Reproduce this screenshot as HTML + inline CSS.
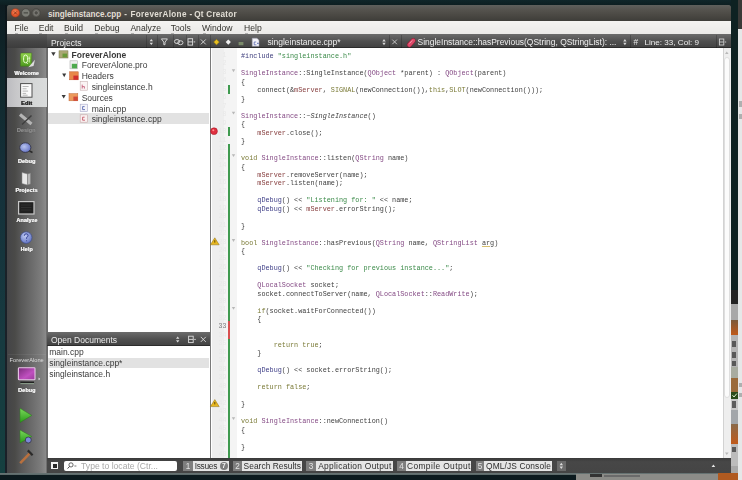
<!DOCTYPE html><html><head><meta charset="utf-8"><style>
*{margin:0;padding:0;box-sizing:border-box}
html,body{width:742px;height:480px;overflow:hidden;background:#10201f;font-family:"Liberation Sans",sans-serif}
.a{position:absolute}
.tx{white-space:nowrap;line-height:1}
svg.a{overflow:visible}
#code{font-family:"Liberation Mono",monospace;font-size:8px;line-height:8.486px;color:#3e3e3e;white-space:pre;transform:scaleX(0.8505);transform-origin:0 0}
#code .p{color:#40407e}
#code .s{color:#3a8a48}
#code .t{color:#844a84}
#code .k{color:#7a7a36}
#code .f{color:#884040}
#code .m{color:#404088}
#code i{font-style:italic}
#code u{text-decoration:underline;text-decoration-color:#d8c070}
</style></head><body><div id="root" style="position:absolute;left:0;top:0;width:742px;height:480px;overflow:hidden;filter:blur(0.3px)">
<div class="a" style="left:0.00px;top:0.00px;width:742.00px;height:6.00px;background:linear-gradient(#10262a,#0d1d20)"></div>
<div class="a" style="left:0.00px;top:5.00px;width:7.00px;height:475.00px;background:linear-gradient(#0e1c21,#10282c 15%,#15303a 35%,#173a40 70%,#154040)"></div>
<div class="a" style="left:4.80px;top:5.00px;width:2.20px;height:468.00px;background:linear-gradient(#0c161a,#1a2228 40%,#1a2028)"></div>
<div class="a" style="left:0.00px;top:472.60px;width:742.00px;height:7.40px;background:linear-gradient(#6a7676,#5a6868 25%,#0c1a1e 32%,#0b1a1e)"></div>
<div class="a" style="left:576.00px;top:474.40px;width:166.00px;height:5.60px;background:#8c8c88"></div>
<div class="a" style="left:590.00px;top:474.00px;width:12.00px;height:2.50px;background:#333"></div>
<div class="a" style="left:604.00px;top:475.00px;width:36.00px;height:2.00px;background:#6a6a6a"></div>
<div class="a" style="left:718.00px;top:473.00px;width:24.00px;height:7.00px;background:#b05a20"></div>
<div class="a" style="left:731.00px;top:0.00px;width:6.60px;height:480.00px;background:#0e2222"></div>
<div class="a" style="left:737.60px;top:0.00px;width:4.40px;height:28.70px;background:#3a3a38"></div>
<div class="a" style="left:737.60px;top:28.70px;width:4.40px;height:451.30px;background:#e6e8e8"></div>
<div class="a" style="left:731.00px;top:290.00px;width:6.60px;height:14.00px;background:#232323"></div>
<div class="a" style="left:731.00px;top:304.00px;width:6.60px;height:16.00px;background:#a8a8a8"></div>
<div class="a" style="left:731.00px;top:320.00px;width:6.60px;height:15.00px;background:linear-gradient(#7a5a3a,#c05a1a)"></div>
<div class="a" style="left:731.00px;top:335.00px;width:6.60px;height:32.00px;background:#b4b4b4"></div>
<div class="a" style="left:731.00px;top:367.00px;width:6.60px;height:11.00px;background:#a8aca0"></div>
<div class="a" style="left:731.00px;top:378.00px;width:6.60px;height:14.00px;background:#9a6a3a"></div>
<div class="a" style="left:731.00px;top:392.00px;width:6.60px;height:7.00px;background:#2a4a1a"></div>
<div class="a" style="left:731.00px;top:399.00px;width:6.60px;height:11.00px;background:#c8c8c8"></div>
<div class="a" style="left:731.00px;top:410.00px;width:6.60px;height:14.00px;background:#a2a6aa"></div>
<div class="a" style="left:731.00px;top:424.00px;width:6.60px;height:20.00px;background:linear-gradient(#8a6a4a,#c05a1a)"></div>
<div class="a" style="left:731.00px;top:444.00px;width:6.60px;height:22.00px;background:#bcbcbc"></div>
<div class="a" style="left:731.00px;top:466.00px;width:6.60px;height:7.00px;background:#a8a8a8"></div>
<div class="a" style="left:731.00px;top:473.00px;width:6.60px;height:7.00px;background:#b05a20"></div>
<div class="a" style="left:731.80px;top:341.00px;width:4.20px;height:6.00px;background:#3a3a3a;opacity:.75"></div>
<div class="a" style="left:731.80px;top:352.00px;width:4.20px;height:6.00px;background:#3a3a3a;opacity:.75"></div>
<div class="a" style="left:731.80px;top:361.00px;width:4.20px;height:5.00px;background:#3a3a3a;opacity:.75"></div>
<div class="a" style="left:731.80px;top:401.00px;width:4.20px;height:7.00px;background:#3a3a3a;opacity:.75"></div>
<div class="a" style="left:731.80px;top:447.00px;width:4.20px;height:5.00px;background:#3a3a3a;opacity:.75"></div>
<svg class="a" style="left:0;top:0" width="742" height="480" viewBox="0 0 742 480"><path d="M732.5 395.2 L734 397 L736.8 393.6" fill="none" stroke="#e0f0d0" stroke-width="1"/></svg>
<div class="a" style="left:738.60px;top:101.00px;width:3.40px;height:6.00px;background:#777;opacity:.5"></div>
<div class="a" style="left:738.60px;top:114.00px;width:3.40px;height:5.00px;background:#777;opacity:.5"></div>
<div class="a" style="left:738.60px;top:383.00px;width:3.40px;height:4.00px;background:#777;opacity:.5"></div>
<div class="a" style="left:738.60px;top:393.00px;width:3.40px;height:4.00px;background:#777;opacity:.5"></div>
<div class="a" style="left:7.00px;top:5.00px;width:724.00px;height:468.00px;background:#5a5a5a;border-radius:4px 4px 0 0"></div>
<div class="a" style="left:7.00px;top:5.00px;width:724.00px;height:15.80px;background:linear-gradient(#5f605d,#55534e 30%,#4a4843 65%,#3e3d39);border-radius:2.5px 2.5px 0 0"></div>
<svg class="a" style="left:0;top:0" width="742" height="480" viewBox="0 0 742 480">
<defs><radialGradient id="cls" cx=".45" cy=".4" r=".6"><stop offset="0" stop-color="#f5885a"/><stop offset=".7" stop-color="#e0542a"/><stop offset="1" stop-color="#c4461f"/></radialGradient>
<radialGradient id="gb" cx=".5" cy=".45" r=".6"><stop offset="0" stop-color="#8a8984"/><stop offset="1" stop-color="#62615c"/></radialGradient></defs>
<circle cx="15.4" cy="12.9" r="4.4" fill="url(#cls)" stroke="#6a3a2a" stroke-width=".4"/>
<path d="M13.9 11.4 l3 3 M16.9 11.4 l-3 3" stroke="#7a2a10" stroke-width=".8"/>
<circle cx="25.8" cy="12.9" r="4.2" fill="#7c7d76" stroke="#44433f" stroke-width=".7"/>
<path d="M23.6 12.9 h4.4" stroke="#3e3d39" stroke-width="1"/>
<circle cx="36.2" cy="12.9" r="4.2" fill="#66655f" stroke="#44433f" stroke-width=".7"/>
<circle cx="36.2" cy="12.9" r="2.2" fill="#4e4d48" stroke="#8a8984" stroke-width=".8"/>
</svg>
<div class="a tx" style="left:48.10px;top:10.70px;font-size:8.15px;color:#e2ded5;font-weight:bold;">singleinstance.cpp</div>
<div class="a tx" style="left:124.20px;top:10.70px;font-size:8.15px;color:#e2ded5;font-weight:bold;">-</div>
<div class="a tx" style="left:130.50px;top:10.70px;font-size:8.15px;color:#e2ded5;font-weight:bold;letter-spacing:.32px">ForeverAlone</div>
<div class="a tx" style="left:189.50px;top:10.70px;font-size:8.15px;color:#e2ded5;font-weight:bold;">-</div>
<div class="a tx" style="left:194.30px;top:10.70px;font-size:8.15px;color:#e2ded5;font-weight:bold;letter-spacing:.24px">Qt Creator</div>
<div class="a" style="left:7.00px;top:20.80px;width:724.00px;height:13.20px;background:linear-gradient(#f4f3f1,#ebeae8)"></div>
<div class="a tx" style="left:14.60px;top:23.82px;font-size:8.60px;color:#35342f;">File</div>
<div class="a" style="left:15.20px;top:32.50px;width:3.00px;height:0.60px;background:rgba(90,90,90,.4)"></div>
<div class="a tx" style="left:38.70px;top:23.82px;font-size:8.60px;color:#35342f;">Edit</div>
<div class="a" style="left:39.30px;top:32.50px;width:3.00px;height:0.60px;background:rgba(90,90,90,.4)"></div>
<div class="a tx" style="left:64.00px;top:23.82px;font-size:8.60px;color:#35342f;">Build</div>
<div class="a" style="left:64.60px;top:32.50px;width:3.00px;height:0.60px;background:rgba(90,90,90,.4)"></div>
<div class="a tx" style="left:94.30px;top:23.82px;font-size:8.60px;color:#35342f;">Debug</div>
<div class="a" style="left:94.90px;top:32.50px;width:3.00px;height:0.60px;background:rgba(90,90,90,.4)"></div>
<div class="a tx" style="left:130.40px;top:23.82px;font-size:8.60px;color:#35342f;">Analyze</div>
<div class="a" style="left:131.00px;top:32.50px;width:3.00px;height:0.60px;background:rgba(90,90,90,.4)"></div>
<div class="a tx" style="left:170.80px;top:23.82px;font-size:8.60px;color:#35342f;">Tools</div>
<div class="a" style="left:171.40px;top:32.50px;width:3.00px;height:0.60px;background:rgba(90,90,90,.4)"></div>
<div class="a tx" style="left:202.00px;top:23.82px;font-size:8.60px;color:#35342f;">Window</div>
<div class="a" style="left:202.60px;top:32.50px;width:3.00px;height:0.60px;background:rgba(90,90,90,.4)"></div>
<div class="a tx" style="left:244.00px;top:23.82px;font-size:8.60px;color:#35342f;">Help</div>
<div class="a" style="left:244.60px;top:32.50px;width:3.00px;height:0.60px;background:rgba(90,90,90,.4)"></div>
<div class="a" style="left:7.00px;top:34.20px;width:39.50px;height:438.80px;background:linear-gradient(90deg,#444447,#4a4a48 20%,#585858 35%,#6a6a6a 60%,#7c7c7c 85%,#8a8a8a 97%,#5a5a5a)"></div>
<div class="a" style="left:7.00px;top:34.20px;width:39.50px;height:14.20px;background:linear-gradient(#5c5c5c,#474747 50%,#3c3c3c)"></div>
<div class="a" style="left:7.00px;top:77.60px;width:39.50px;height:29.20px;background:linear-gradient(90deg,#bcbcc0,#c8c8ca 25%,#d4d6d6 60%,#dadcdc)"></div>
<div class="a tx" style="left:6.50px;top:71.46px;width:40px;text-align:center;font-size:5.60px;color:#f0f0f0;font-weight:bold;text-shadow:.35px 0 0 #f0f0f0,0 0 1px rgba(0,0,0,.5)">Welcome</div>
<div class="a tx" style="left:6.5px;top:100.51px;width:40px;text-align:center;font-size:5.9px;color:#2a2a2a;font-weight:bold;text-shadow:.35px 0 0 #2a2a2a">Edit</div>
<div class="a tx" style="left:6.00px;top:127.76px;width:40px;text-align:center;font-size:5.60px;color:#8a8a8a;font-weight:bold;text-shadow:.35px 0 0 #8a8a8a,0 0 1px rgba(0,0,0,.5)">Design</div>
<div class="a tx" style="left:6.50px;top:159.46px;width:40px;text-align:center;font-size:5.60px;color:#f0f0f0;font-weight:bold;text-shadow:.35px 0 0 #f0f0f0,0 0 1px rgba(0,0,0,.5)">Debug</div>
<div class="a tx" style="left:6.40px;top:188.46px;width:40px;text-align:center;font-size:5.60px;color:#f0f0f0;font-weight:bold;text-shadow:.35px 0 0 #f0f0f0,0 0 1px rgba(0,0,0,.5)">Projects</div>
<div class="a tx" style="left:6.80px;top:218.16px;width:40px;text-align:center;font-size:5.60px;color:#f0f0f0;font-weight:bold;text-shadow:.35px 0 0 #f0f0f0,0 0 1px rgba(0,0,0,.5)">Analyze</div>
<div class="a tx" style="left:6.50px;top:247.06px;width:40px;text-align:center;font-size:5.60px;color:#f0f0f0;font-weight:bold;text-shadow:.35px 0 0 #f0f0f0,0 0 1px rgba(0,0,0,.5)">Help</div>
<div class="a" style="left:8.00px;top:354.00px;width:38.00px;height:0.80px;background:rgba(255,255,255,.06)"></div>
<div class="a tx" style="left:6.7px;top:357.77px;width:40px;text-align:center;font-size:5.7px;color:#dcdcdc">ForeverAlone</div>
<div class="a tx" style="left:6.70px;top:388.06px;width:40px;text-align:center;font-size:5.60px;color:#f0f0f0;font-weight:bold;text-shadow:.35px 0 0 #f0f0f0,0 0 1px rgba(0,0,0,.5)">Debug</div>
<svg class="a" style="left:0;top:0" width="742" height="480" viewBox="0 0 742 480">
<defs>
<linearGradient id="qtg" x1="0" y1="0" x2="0" y2="1"><stop offset="0" stop-color="#8fd14a"/><stop offset="1" stop-color="#4e9a1e"/></linearGradient>
<linearGradient id="mon" x1="0" y1="0" x2="1" y2="1"><stop offset="0" stop-color="#7a2a7a"/><stop offset=".6" stop-color="#c050c0"/><stop offset="1" stop-color="#9a3a9a"/></linearGradient>
<linearGradient id="grn" x1="0" y1="0" x2="0" y2="1"><stop offset="0" stop-color="#7ad85a"/><stop offset="1" stop-color="#2a9a1a"/></linearGradient>
<radialGradient id="bug" cx=".4" cy=".4" r=".6"><stop offset="0" stop-color="#b8c4f0"/><stop offset="1" stop-color="#6a78c8"/></radialGradient>
<radialGradient id="help" cx=".4" cy=".35" r=".7"><stop offset="0" stop-color="#c0ccf4"/><stop offset="1" stop-color="#5d6fc0"/></radialGradient>
</defs>
<!-- Welcome Qt logo -->
<path d="M21.5 53 H31.7 V64 L29.5 66.2 H20.4 V54 Z" fill="url(#qtg)" stroke="#3e6e1a" stroke-width=".5"/>
<path d="M23.6 57.6 q0-2.6 2-2.6 q2 0 2 2.6 v2.8 q0 2.4-2 2.4 q-2 0-2-2.4z M26.2 62 l1.4 2" fill="none" stroke="#e8ffd0" stroke-width="1"/>
<path d="M29.2 56.5 v6 M28.4 58.2 h1.8" stroke="#e8ffd0" stroke-width=".8"/>
<path d="M28.3 67.3 L35 59.8 L33.5 66 Z" fill="#dcdcdc"/>
<!-- Edit doc -->
<rect x="20.6" y="83.6" width="11.4" height="13.6" fill="#fafafa" stroke="#505050" stroke-width="1"/>
<path d="M22.6 86.5h6 M22.6 88.8h4 M22.6 91.1h5.5 M22.6 93.4h3.5 M22.6 95.2h5" stroke="#9a9a9a" stroke-width=".7"/>
<!-- Design -->
<path d="M20 114.5 L31.5 124" stroke="#b4b4b4" stroke-width="3.2"/>
<path d="M31.5 115.5 L22 124.5" stroke="#3e3e3e" stroke-width="1.4"/>
<!-- Debug bug -->
<ellipse cx="25.3" cy="147.6" rx="5.6" ry="4.8" fill="url(#bug)" stroke="#2e2e3e" stroke-width=".8"/>
<path d="M29.5 151 L32.5 152.5" stroke="#2a2a2a" stroke-width="1.5"/>
<!-- Projects -->
<path d="M22 172.5 L27.5 174 V185 L22 183.5 Z" fill="#e8e8e8" stroke="#888" stroke-width=".5"/>
<path d="M27.5 174 L30.6 173 V184 L27.5 185 Z" fill="#b8b8b8" stroke="#777" stroke-width=".5"/>
<!-- Analyze -->
<rect x="18.6" y="201.6" width="15.4" height="12.4" fill="#202020" stroke="#c8c8c8" stroke-width="1.2"/>
<path d="M21 205h10.5 M21 207.5h10.5 M21 210h10.5" stroke="#3a3a3a" stroke-width=".6"/>
<!-- Help -->
<circle cx="26.2" cy="237.6" r="5.8" fill="url(#help)" stroke="#3a4a8a" stroke-width=".6"/>
<path d="M24.3 235.8 q0-2 1.9-2 q1.9 0 1.9 1.8 q0 1.2-1.5 1.9 v1.3" fill="none" stroke="#27348a" stroke-width=".9"/>
<circle cx="26.6" cy="240.8" r=".55" fill="#27348a"/>
<!-- Monitor -->
<rect x="18.4" y="367.8" width="16.6" height="12" rx=".8" fill="url(#mon)" stroke="#e8c8e8" stroke-width="1.1"/>
<path d="M20.4 382.6 H34 " stroke="#202020" stroke-width="2"/>
<path d="M20.4 383.6 H34 " stroke="#c8e8c8" stroke-width=".6"/>
<path d="M38.6 377.6 L40.2 378.9 L38.6 380.2 Z" fill="#f0f0f0"/>
<!-- Run -->
<path d="M20 408.3 L31.8 415.4 L20 422.5 Z" fill="url(#grn)" stroke="#2a7a1a" stroke-width=".5"/>
<path d="M20 430 L31.8 436.5 L20 443 Z" fill="url(#grn)" stroke="#2a7a1a" stroke-width=".5"/>
<circle cx="28.3" cy="440" r="3" fill="#7c88d8" stroke="#2a2a3a" stroke-width=".7"/>
<!-- Hammer -->
<path d="M20.2 463.2 L30 453.2" stroke="#b8703e" stroke-width="2.6"/>
<path d="M27.8 450.4 L32.6 455.2" stroke="#2a2a2a" stroke-width="2.2"/>
</svg>
<div class="a" style="left:46.50px;top:34.20px;width:163.80px;height:14.20px;background:linear-gradient(#6c6c6c,#505050 55%,#434343);border-bottom:1px solid #2c2c2c"></div>
<div class="a tx" style="left:50.90px;top:38.60px;font-size:8.50px;color:#ececec;">Projects</div>
<div class="a" style="left:46.50px;top:48.40px;width:163.80px;height:283.80px;background:#fff;border-left:1px solid #6a6a6a"></div>
<div class="a" style="left:47.50px;top:113.10px;width:161.30px;height:10.50px;background:#e2e2e2"></div>
<div class="a tx" style="left:71.50px;top:50.50px;font-size:8.50px;color:#3a3a3a;font-weight:bold;">ForeverAlone</div>
<div class="a tx" style="left:81.70px;top:61.30px;font-size:8.50px;color:#3a3a3a;">ForeverAlone.pro</div>
<div class="a tx" style="left:81.70px;top:72.10px;font-size:8.50px;color:#3a3a3a;">Headers</div>
<div class="a tx" style="left:91.70px;top:82.90px;font-size:8.50px;color:#3a3a3a;">singleinstance.h</div>
<div class="a tx" style="left:81.70px;top:93.70px;font-size:8.50px;color:#3a3a3a;">Sources</div>
<div class="a tx" style="left:91.70px;top:104.50px;font-size:8.50px;color:#3a3a3a;">main.cpp</div>
<div class="a tx" style="left:91.70px;top:115.30px;font-size:8.50px;color:#3a3a3a;">singleinstance.cpp</div>
<svg class="a" style="left:0;top:0" width="742" height="480" viewBox="0 0 742 480">
<path d="M51.2 52.3 H55.6 L53.4 56 Z" fill="#3a3a3a"/>
<path d="M62.2 73.6 H66.2 L64.2 77.3 Z" fill="#3a3a3a"/>
<path d="M61.6 95 H65.8 L63.7 98.5 Z" fill="#3a3a3a"/>
<rect x="59" y="50.8" width="9" height="7.2" fill="#aaa874" stroke="#7a7850" stroke-width=".5"/>
<rect x="62.5" y="53.6" width="4.6" height="3.8" fill="#6a9a3a"/>
<rect x="70" y="60.8" width="7.6" height="8" fill="#f0f0f0" stroke="#b0b0b0" stroke-width=".6"/>
<rect x="71.8" y="63.8" width="5.2" height="4.6" fill="#4eaa4e"/>
<rect x="69.6" y="71.8" width="8.6" height="8" fill="#e8884a" stroke="#c05a2a" stroke-width=".5"/>
<rect x="73.4" y="75.6" width="4.8" height="4.2" fill="#d03030"/>
<rect x="80.2" y="81.6" width="7.2" height="8.6" fill="#fbf4f4" stroke="#c8b0b0" stroke-width=".6"/>
<path d="M82.2 84.6 v4 M82.2 86.6 h2.2 v2" fill="none" stroke="#c05070" stroke-width=".8"/>
<rect x="69" y="93.6" width="8.8" height="7.2" fill="#ec9a5c" stroke="#c06a3a" stroke-width=".5"/>
<rect x="73.4" y="96.6" width="4.4" height="4.2" fill="#d04a3a"/>
<rect x="80.2" y="104.2" width="7.2" height="7.2" fill="#f4f4fa" stroke="#a8a8c8" stroke-width=".6"/>
<path d="M84.6 106.6 h-2 v3 h2.4" fill="none" stroke="#4a5aa8" stroke-width=".8"/>
<rect x="80.2" y="114.8" width="7.2" height="7.4" fill="#faf0f0" stroke="#c8a8a8" stroke-width=".6"/>
<path d="M84.6 117.2 h-2 v3 h2.4" fill="none" stroke="#c04a5a" stroke-width=".8"/>
</svg>
<div class="a" style="left:46.50px;top:332.20px;width:163.80px;height:13.80px;background:linear-gradient(#6c6c6c,#505050 55%,#434343);border-bottom:1px solid #2c2c2c"></div>
<div class="a tx" style="left:50.90px;top:336.20px;font-size:8.50px;color:#ececec;">Open Documents</div>
<div class="a" style="left:46.50px;top:346.00px;width:163.80px;height:112.20px;background:#fff;border-left:1px solid #6a6a6a"></div>
<div class="a" style="left:47.50px;top:357.60px;width:161.30px;height:10.20px;background:#e2e2e2"></div>
<div class="a tx" style="left:49.20px;top:348.20px;font-size:8.50px;color:#3a3a3a;">main.cpp</div>
<div class="a tx" style="left:49.20px;top:359.20px;font-size:8.50px;color:#3a3a3a;">singleinstance.cpp*</div>
<div class="a tx" style="left:49.20px;top:370.10px;font-size:8.50px;color:#3a3a3a;">singleinstance.h</div>
<svg class="a" style="left:0;top:0" width="742" height="480" viewBox="0 0 742 480" fill="none" stroke="#dcdcdc" stroke-width=".9"><path d="M149.6 41.3 L151.3 38.9 L153 41.3 Z M149.6 42.7 L151.3 45.1 L153 42.7 Z" fill="#dcdcdc" stroke="none"/><path d="M161.4 38.9 h6 l-2.4 3.2 v2.6 h-1.2 v-2.6 Z"/><ellipse cx="177" cy="41.5" rx="2.6" ry="2"/><ellipse cx="180.4" cy="42.7" rx="2.6" ry="2"/><rect x="188.0" y="38.7" width="4.6" height="6.4"/><path d="M188.0 41.9 h4.6 M193.6 41.9 h1.6"/><path d="M200.8 39.4 l5 5 M205.8 39.4 l-5 5"/></svg>
<svg class="a" style="left:0;top:0" width="742" height="480" viewBox="0 0 742 480" fill="none" stroke="#dcdcdc" stroke-width=".9"><path d="M176 338.8 L177.7 336.4 L179.4 338.8 Z M176 340.2 L177.7 342.6 L179.4 340.2 Z" fill="#dcdcdc" stroke="none"/><rect x="188.6" y="336.2" width="4.6" height="6.4"/><path d="M188.6 339.4 h4.6 M194.2 339.4 h1.6"/><path d="M200.8 336.9 l5 5 M205.8 336.9 l-5 5"/></svg>
<div class="a" style="left:146.00px;top:35.00px;width:0.80px;height:13.00px;background:rgba(0,0,0,.18)"></div>
<div class="a" style="left:156.60px;top:35.00px;width:0.80px;height:13.00px;background:rgba(0,0,0,.18)"></div>
<div class="a" style="left:173.00px;top:35.00px;width:0.80px;height:13.00px;background:rgba(0,0,0,.18)"></div>
<div class="a" style="left:185.60px;top:35.00px;width:0.80px;height:13.00px;background:rgba(0,0,0,.18)"></div>
<div class="a" style="left:198.00px;top:35.00px;width:0.80px;height:13.00px;background:rgba(0,0,0,.18)"></div>
<div class="a" style="left:210.30px;top:34.20px;width:520.70px;height:14.20px;background:linear-gradient(#6c6c6c,#505050 55%,#434343);border-bottom:1px solid #2c2c2c"></div>
<svg class="a" style="left:0;top:0" width="742" height="480" viewBox="0 0 742 480">
<path d="M216.5 39.3 L219.3 42.1 L216.5 44.9 L213.7 42.1 Z" fill="#e8c020" stroke="#8a7010" stroke-width=".5"/>
<path d="M228.3 39.5 L230.9 42.1 L228.3 44.7 L225.7 42.1 Z" fill="#f0f0f0"/>
<rect x="238.6" y="42" width="4.8" height="3.2" fill="#7a8a6a"/>
<path d="M252.2 38.2 H257 L259 40.2 V46.2 H252.2 Z" fill="#f2f2f8" stroke="#9a9ab0" stroke-width=".5"/>
<path d="M256.2 42 h-2 v2.8 h2.2 M257.2 43.4 h1.4 M257.9 42.7 v1.4" fill="none" stroke="#4a5aa8" stroke-width=".7"/>
<path d="M382.3 41.4 L384 39 L385.7 41.4 Z M382.3 42.8 L384 45.2 L385.7 42.8 Z" fill="#d8d8d8"/>
<path d="M392.3 39.6 l4.6 4.6 M396.9 39.6 l-4.6 4.6" stroke="#cfcfcf" stroke-width=".9"/>
<path d="M409.4 44.8 L413.2 40.6" stroke="#8a1a30" stroke-width="5" stroke-linecap="round"/><path d="M409.4 44.8 L413.2 40.6" stroke="#dc4a6a" stroke-width="4" stroke-linecap="round"/><path d="M409.8 43.2 L412 40.8" stroke="#f4a0b0" stroke-width=".9" stroke-linecap="round"/>
<path d="M623.2 41.4 L624.9 39 L626.6 41.4 Z M623.2 42.8 L624.9 45.2 L626.6 42.8 Z" fill="#d8d8d8"/>
<rect x="719.4" y="39" width="4.4" height="6" fill="none" stroke="#d0d0d0" stroke-width=".9"/>
<path d="M719.4 42 h4.4 M724.8 42 h1.4" stroke="#d0d0d0" stroke-width=".9"/>
</svg>
<div class="a" style="left:210.30px;top:35.00px;width:0.80px;height:13.00px;background:rgba(0,0,0,.2)"></div>
<div class="a" style="left:388.60px;top:35.00px;width:0.80px;height:13.00px;background:rgba(0,0,0,.2)"></div>
<div class="a" style="left:400.50px;top:35.00px;width:0.80px;height:13.00px;background:rgba(0,0,0,.2)"></div>
<div class="a" style="left:629.60px;top:35.00px;width:0.80px;height:13.00px;background:rgba(0,0,0,.2)"></div>
<div class="a" style="left:716.00px;top:35.00px;width:0.80px;height:13.00px;background:rgba(0,0,0,.2)"></div>
<div class="a tx" style="left:267.40px;top:38.30px;font-size:8.50px;color:#eeeeee;">singleinstance.cpp*</div>
<div class="a tx" style="left:417.60px;top:38.35px;font-size:8.45px;color:#eeeeee;">SingleInstance::hasPrevious(QString, QStringList): ...</div>
<div class="a tx" style="left:633.40px;top:38.47px;font-size:8.30px;color:#e8e8e8;">#</div>
<div class="a tx" style="left:644.50px;top:38.64px;font-size:8.10px;color:#eeeeee;">Line: 33, Col: 9</div>
<div class="a" style="left:210.30px;top:48.40px;width:520.70px;height:409.80px;background:#fff"></div>
<div class="a" style="left:210.30px;top:48.40px;width:1.10px;height:409.80px;background:#7a7a7a"></div>
<div class="a" style="left:211.50px;top:48.40px;width:12.50px;height:409.80px;background:#eeeeee"></div>
<div class="a" style="left:224.00px;top:48.40px;width:12.50px;height:409.80px;background:#f4f4f4"></div>
<div class="a tx" style="left:211.5px;width:15px;text-align:right;top:52.82px;font-family:'Liberation Mono',monospace;font-size:6.6px;color:#e8e8e8">1</div>
<div class="a tx" style="left:211.5px;width:15px;text-align:right;top:61.31px;font-family:'Liberation Mono',monospace;font-size:6.6px;color:#e8e8e8">2</div>
<div class="a tx" style="left:211.5px;width:15px;text-align:right;top:69.79px;font-family:'Liberation Mono',monospace;font-size:6.6px;color:#e8e8e8">3</div>
<div class="a tx" style="left:211.5px;width:15px;text-align:right;top:78.28px;font-family:'Liberation Mono',monospace;font-size:6.6px;color:#e8e8e8">4</div>
<div class="a tx" style="left:211.5px;width:15px;text-align:right;top:86.77px;font-family:'Liberation Mono',monospace;font-size:6.6px;color:#e8e8e8">5</div>
<div class="a tx" style="left:211.5px;width:15px;text-align:right;top:95.25px;font-family:'Liberation Mono',monospace;font-size:6.6px;color:#e8e8e8">6</div>
<div class="a tx" style="left:211.5px;width:15px;text-align:right;top:103.74px;font-family:'Liberation Mono',monospace;font-size:6.6px;color:#e8e8e8">7</div>
<div class="a tx" style="left:211.5px;width:15px;text-align:right;top:112.22px;font-family:'Liberation Mono',monospace;font-size:6.6px;color:#e8e8e8">8</div>
<div class="a tx" style="left:211.5px;width:15px;text-align:right;top:120.71px;font-family:'Liberation Mono',monospace;font-size:6.6px;color:#e8e8e8">9</div>
<div class="a tx" style="left:211.5px;width:15px;text-align:right;top:129.20px;font-family:'Liberation Mono',monospace;font-size:6.6px;color:#e8e8e8">10</div>
<div class="a tx" style="left:211.5px;width:15px;text-align:right;top:137.68px;font-family:'Liberation Mono',monospace;font-size:6.6px;color:#e8e8e8">11</div>
<div class="a tx" style="left:211.5px;width:15px;text-align:right;top:146.17px;font-family:'Liberation Mono',monospace;font-size:6.6px;color:#e8e8e8">12</div>
<div class="a tx" style="left:211.5px;width:15px;text-align:right;top:154.65px;font-family:'Liberation Mono',monospace;font-size:6.6px;color:#e8e8e8">13</div>
<div class="a tx" style="left:211.5px;width:15px;text-align:right;top:163.14px;font-family:'Liberation Mono',monospace;font-size:6.6px;color:#e8e8e8">14</div>
<div class="a tx" style="left:211.5px;width:15px;text-align:right;top:171.63px;font-family:'Liberation Mono',monospace;font-size:6.6px;color:#e8e8e8">15</div>
<div class="a tx" style="left:211.5px;width:15px;text-align:right;top:180.11px;font-family:'Liberation Mono',monospace;font-size:6.6px;color:#e8e8e8">16</div>
<div class="a tx" style="left:211.5px;width:15px;text-align:right;top:188.60px;font-family:'Liberation Mono',monospace;font-size:6.6px;color:#e8e8e8">17</div>
<div class="a tx" style="left:211.5px;width:15px;text-align:right;top:197.08px;font-family:'Liberation Mono',monospace;font-size:6.6px;color:#e8e8e8">18</div>
<div class="a tx" style="left:211.5px;width:15px;text-align:right;top:205.57px;font-family:'Liberation Mono',monospace;font-size:6.6px;color:#e8e8e8">19</div>
<div class="a tx" style="left:211.5px;width:15px;text-align:right;top:214.06px;font-family:'Liberation Mono',monospace;font-size:6.6px;color:#e8e8e8">20</div>
<div class="a tx" style="left:211.5px;width:15px;text-align:right;top:222.54px;font-family:'Liberation Mono',monospace;font-size:6.6px;color:#e8e8e8">21</div>
<div class="a tx" style="left:211.5px;width:15px;text-align:right;top:231.03px;font-family:'Liberation Mono',monospace;font-size:6.6px;color:#e8e8e8">22</div>
<div class="a tx" style="left:211.5px;width:15px;text-align:right;top:239.51px;font-family:'Liberation Mono',monospace;font-size:6.6px;color:#e8e8e8">23</div>
<div class="a tx" style="left:211.5px;width:15px;text-align:right;top:248.00px;font-family:'Liberation Mono',monospace;font-size:6.6px;color:#e8e8e8">24</div>
<div class="a tx" style="left:211.5px;width:15px;text-align:right;top:256.49px;font-family:'Liberation Mono',monospace;font-size:6.6px;color:#e8e8e8">25</div>
<div class="a tx" style="left:211.5px;width:15px;text-align:right;top:264.97px;font-family:'Liberation Mono',monospace;font-size:6.6px;color:#e8e8e8">26</div>
<div class="a tx" style="left:211.5px;width:15px;text-align:right;top:273.46px;font-family:'Liberation Mono',monospace;font-size:6.6px;color:#e8e8e8">27</div>
<div class="a tx" style="left:211.5px;width:15px;text-align:right;top:281.94px;font-family:'Liberation Mono',monospace;font-size:6.6px;color:#e8e8e8">28</div>
<div class="a tx" style="left:211.5px;width:15px;text-align:right;top:290.43px;font-family:'Liberation Mono',monospace;font-size:6.6px;color:#e8e8e8">29</div>
<div class="a tx" style="left:211.5px;width:15px;text-align:right;top:298.92px;font-family:'Liberation Mono',monospace;font-size:6.6px;color:#e8e8e8">30</div>
<div class="a tx" style="left:211.5px;width:15px;text-align:right;top:307.40px;font-family:'Liberation Mono',monospace;font-size:6.6px;color:#e8e8e8">31</div>
<div class="a tx" style="left:211.5px;width:15px;text-align:right;top:315.89px;font-family:'Liberation Mono',monospace;font-size:6.6px;color:#e8e8e8">32</div>
<div class="a tx" style="left:211.5px;width:15px;text-align:right;top:324.37px;font-family:'Liberation Mono',monospace;font-size:6.6px;color:#7a7a7a">33</div>
<div class="a tx" style="left:211.5px;width:15px;text-align:right;top:332.86px;font-family:'Liberation Mono',monospace;font-size:6.6px;color:#e8e8e8">34</div>
<div class="a tx" style="left:211.5px;width:15px;text-align:right;top:341.35px;font-family:'Liberation Mono',monospace;font-size:6.6px;color:#e8e8e8">35</div>
<div class="a tx" style="left:211.5px;width:15px;text-align:right;top:349.83px;font-family:'Liberation Mono',monospace;font-size:6.6px;color:#e8e8e8">36</div>
<div class="a tx" style="left:211.5px;width:15px;text-align:right;top:358.32px;font-family:'Liberation Mono',monospace;font-size:6.6px;color:#e8e8e8">37</div>
<div class="a tx" style="left:211.5px;width:15px;text-align:right;top:366.80px;font-family:'Liberation Mono',monospace;font-size:6.6px;color:#e8e8e8">38</div>
<div class="a tx" style="left:211.5px;width:15px;text-align:right;top:375.29px;font-family:'Liberation Mono',monospace;font-size:6.6px;color:#e8e8e8">39</div>
<div class="a tx" style="left:211.5px;width:15px;text-align:right;top:383.78px;font-family:'Liberation Mono',monospace;font-size:6.6px;color:#e8e8e8">40</div>
<div class="a tx" style="left:211.5px;width:15px;text-align:right;top:392.26px;font-family:'Liberation Mono',monospace;font-size:6.6px;color:#e8e8e8">41</div>
<div class="a tx" style="left:211.5px;width:15px;text-align:right;top:400.75px;font-family:'Liberation Mono',monospace;font-size:6.6px;color:#e8e8e8">42</div>
<div class="a tx" style="left:211.5px;width:15px;text-align:right;top:409.23px;font-family:'Liberation Mono',monospace;font-size:6.6px;color:#e8e8e8">43</div>
<div class="a tx" style="left:211.5px;width:15px;text-align:right;top:417.72px;font-family:'Liberation Mono',monospace;font-size:6.6px;color:#e8e8e8">44</div>
<div class="a tx" style="left:211.5px;width:15px;text-align:right;top:426.21px;font-family:'Liberation Mono',monospace;font-size:6.6px;color:#e8e8e8">45</div>
<div class="a tx" style="left:211.5px;width:15px;text-align:right;top:434.69px;font-family:'Liberation Mono',monospace;font-size:6.6px;color:#e8e8e8">46</div>
<div class="a tx" style="left:211.5px;width:15px;text-align:right;top:443.18px;font-family:'Liberation Mono',monospace;font-size:6.6px;color:#e8e8e8">47</div>
<div class="a tx" style="left:211.5px;width:15px;text-align:right;top:451.66px;font-family:'Liberation Mono',monospace;font-size:6.6px;color:#e8e8e8">48</div>
<div class="a" style="left:228.00px;top:127.47px;width:2.00px;height:8.49px;background:#3f9a4f"></div>
<div class="a" style="left:228.00px;top:144.45px;width:2.00px;height:176.21px;background:#3f9a4f"></div>
<div class="a" style="left:228.00px;top:320.65px;width:2.00px;height:18.17px;background:#d85050"></div>
<div class="a" style="left:228.00px;top:338.82px;width:2.00px;height:119.38px;background:#3f9a4f"></div>
<div class="a" style="left:228.00px;top:85.04px;width:2.00px;height:8.49px;background:#3f9a4f"></div>
<svg class="a" style="left:0;top:0" width="742" height="480" viewBox="0 0 742 480"><path d="M231.8 69.37 H235.2 L233.5 72.17 Z" fill="#b8b8b8"/><path d="M231.8 111.80 H235.2 L233.5 114.60 Z" fill="#b8b8b8"/><path d="M231.8 154.23 H235.2 L233.5 157.03 Z" fill="#b8b8b8"/><path d="M231.8 239.09 H235.2 L233.5 241.89 Z" fill="#b8b8b8"/><path d="M231.8 306.98 H235.2 L233.5 309.78 Z" fill="#b8b8b8"/><path d="M231.8 417.30 H235.2 L233.5 420.10 Z" fill="#b8b8b8"/><circle cx="214" cy="131.2" r="3.4" fill="#e03040" stroke="#a01020" stroke-width=".5"/><circle cx="213.3" cy="130.3" r="1" fill="#ff9090"/><path d="M214.8 237.80 L219.2 244.80 H210.4 Z" fill="#e8b820" stroke="#8a6a10" stroke-width=".5"/><path d="M214.8 240.20 v2.4" stroke="#3a2a00" stroke-width=".8"/><path d="M214.8 399.60 L219.2 406.60 H210.4 Z" fill="#e8b820" stroke="#8a6a10" stroke-width=".5"/><path d="M214.8 402.00 v2.4" stroke="#3a2a00" stroke-width=".8"/></svg>
<div id="code" class="a" style="left:240.5px;top:52.23px"><span class="p">#include</span> <span class="s">"singleinstance.h"</span>

<span class="t">SingleInstance</span>::SingleInstance(<span class="t">QObject</span> *parent) : <span class="t">QObject</span>(parent)
{
    connect(&amp;<span class="f">mServer</span>, <span class="k">SIGNAL</span>(newConnection()),<span class="k">this</span>,<span class="k">SLOT</span>(newConnection()));
}

<span class="t">SingleInstance</span>::<i>~SingleInstance</i>()
{
    <span class="f">mServer</span>.close();
}

<span class="k">void</span> <span class="t">SingleInstance</span>::listen(<span class="t">QString</span> name)
{
    <span class="f">mServer</span>.removeServer(name);
    <span class="f">mServer</span>.listen(name);

    <span class="m">qDebug</span>() &lt;&lt; <span class="s">"Listening for: "</span> &lt;&lt; name;
    <span class="m">qDebug</span>() &lt;&lt; <span class="f">mServer</span>.errorString();

}

<span class="k">bool</span> <span class="t">SingleInstance</span>::hasPrevious(<span class="t">QString</span> name, <span class="t">QStringList</span> <u>arg</u>)
{

    <span class="m">qDebug</span>() &lt;&lt; <span class="s">"Checking for previous instance..."</span>;

    <span class="t">QLocalSocket</span> socket;
    socket.connectToServer(name, <span class="t">QLocalSocket</span>::<span class="t">ReadWrite</span>);

    <span class="k">if</span>(socket.waitForConnected())
    {


        <span class="k">return</span> <span class="k">true</span>;
    }

    <span class="m">qDebug</span>() &lt;&lt; socket.errorString();

    <span class="k">return</span> <span class="k">false</span>;

}

<span class="k">void</span> <span class="t">SingleInstance</span>::newConnection()
{

}</div>
<div class="a" style="left:722.60px;top:48.40px;width:8.40px;height:409.80px;background:#eeeeee;border-left:1px solid #d2d2d2"></div>
<div class="a" style="left:723.60px;top:56.50px;width:6.20px;height:341.90px;background:#fbfbfb;border:1px solid #dedede;border-radius:3px"></div>
<svg class="a" style="left:0;top:0" width="742" height="480" viewBox="0 0 742 480"><path d="M725 54 L726.8 51.6 L728.6 54 Z" fill="#b8b8b8"/><path d="M725 452.6 L726.8 455 L728.6 452.6 Z" fill="#b8b8b8"/></svg>
<div class="a" style="left:46.50px;top:458.20px;width:684.50px;height:14.60px;background:linear-gradient(#3a3a3a,#474747 25%,#454545)"></div>
<div class="a" style="left:50.90px;top:462.20px;width:7.60px;height:7.10px;background:#f4f4f4"></div>
<div class="a" style="left:53.40px;top:463.60px;width:3.80px;height:4.40px;background:#2a2a2a"></div>
<div class="a" style="left:64.40px;top:460.80px;width:112.30px;height:10.60px;background:#fff;border-radius:2px"></div>
<svg class="a" style="left:0;top:0" width="742" height="480" viewBox="0 0 742 480"><circle cx="71" cy="464.9" r="2.1" fill="none" stroke="#444" stroke-width=".8"/><path d="M69.6 466.4 L67.6 468.6" stroke="#444" stroke-width="1"/><path d="M74.4 466 h2" stroke="#444" stroke-width=".7"/></svg>
<div class="a tx" style="left:81.10px;top:462.02px;font-size:8.60px;color:#a8a8a8;">Type to locate (Ctr...</div>
<div class="a" style="left:183.40px;top:460.90px;width:9.20px;height:10.30px;background:#7e7e7e"></div>
<div class="a tx" style="left:185.70px;top:462.66px;font-size:8.20px;color:#e4e4e4;">1</div>
<div class="a" style="left:192.60px;top:460.90px;width:36.10px;height:10.30px;background:#e6e6e6"></div>
<div class="a tx" style="left:194.70px;top:462.49px;font-size:8.40px;color:#2e2e2e;letter-spacing:-0.315px">Issues</div>
<div class="a" style="left:233.00px;top:460.90px;width:9.20px;height:10.30px;background:#7e7e7e"></div>
<div class="a tx" style="left:235.30px;top:462.66px;font-size:8.20px;color:#e4e4e4;">2</div>
<div class="a" style="left:242.20px;top:460.90px;width:60.30px;height:10.30px;background:#e6e6e6"></div>
<div class="a tx" style="left:243.60px;top:462.49px;font-size:8.40px;color:#2e2e2e;letter-spacing:0.034px">Search Results</div>
<div class="a" style="left:306.00px;top:460.90px;width:10.20px;height:10.30px;background:#7e7e7e"></div>
<div class="a tx" style="left:308.80px;top:462.66px;font-size:8.20px;color:#e4e4e4;">3</div>
<div class="a" style="left:316.20px;top:460.90px;width:76.80px;height:10.30px;background:#e6e6e6"></div>
<div class="a tx" style="left:318.20px;top:462.49px;font-size:8.40px;color:#2e2e2e;letter-spacing:0.280px">Application Output</div>
<div class="a" style="left:397.40px;top:460.90px;width:8.20px;height:10.30px;background:#7e7e7e"></div>
<div class="a tx" style="left:399.20px;top:462.66px;font-size:8.20px;color:#e4e4e4;">4</div>
<div class="a" style="left:405.60px;top:460.90px;width:65.80px;height:10.30px;background:#e6e6e6"></div>
<div class="a tx" style="left:407.00px;top:462.49px;font-size:8.40px;color:#2e2e2e;letter-spacing:0.395px">Compile Output</div>
<div class="a" style="left:476.00px;top:460.90px;width:8.30px;height:10.30px;background:#7e7e7e"></div>
<div class="a tx" style="left:477.85px;top:462.66px;font-size:8.20px;color:#e4e4e4;">5</div>
<div class="a" style="left:484.30px;top:460.90px;width:67.70px;height:10.30px;background:#e6e6e6"></div>
<div class="a tx" style="left:486.00px;top:462.49px;font-size:8.40px;color:#2e2e2e;letter-spacing:0.116px">QML/JS Console</div>
<div class="a" style="left:219.8px;top:462.4px;width:8px;height:8px;border-radius:50%;background:#7c7c7c"></div>
<div class="a tx" style="left:221.90px;top:463.34px;font-size:6.80px;color:#f4f4f4;font-weight:bold;">7</div>
<div class="a" style="left:556.70px;top:460.90px;width:9.30px;height:10.30px;background:#6a6a6a"></div>
<svg class="a" style="left:0;top:0" width="742" height="480" viewBox="0 0 742 480"><path d="M559.6 465.2 L561.3 462.8 L563 465.2 Z M559.6 466.6 L561.3 469 L563 466.6 Z" fill="#dcdcdc"/><path d="M711.6 467 L713.4 464.6 L715.2 467 Z" fill="#e8e8e8"/></svg>
</div></body></html>
